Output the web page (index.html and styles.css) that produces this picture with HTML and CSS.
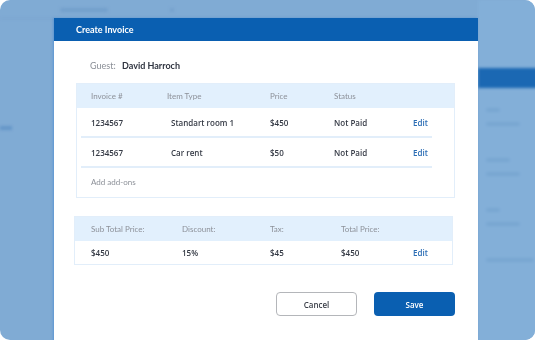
FILE: index.html
```html
<!DOCTYPE html>
<html lang="en">
<head>
  <meta charset="UTF-8">
  <title>Create Invoice</title>
  <link rel="stylesheet" href="styles.css">
</head>
<body>

  <div class="screen">
    <!-- blurred page behind the modal -->
    <div class="backdrop">
      <div class="bd-top">
        <span class="bd-text w50"></span>
        <span class="bd-text w6"></span>
      </div>
      <div class="bd-left-text"></div>
      <div class="bd-side">
        <div class="bd-bar"></div>
        <span class="bd-text w20"></span>
        <span class="bd-text w40"></span>
        <span class="bd-text w30 gap"></span>
        <span class="bd-text w40"></span>
        <span class="bd-text w20 gap"></span>
        <span class="bd-text w40"></span>
        <span class="bd-text w50 gap"></span>
      </div>
    </div>

    <div class="modal">
      <div class="modal-head">Create Invoice</div>
      <div class="modal-body">
        <div class="guest">
          <span class="label">Guest:</span>
          <span class="name">David Harroch</span>
        </div>

        <div class="box items">
          <div class="row head">
            <span>Invoice #</span>
            <span>Item Type</span>
            <span>Price</span>
            <span>Status</span>
            <span></span>
          </div>
          <div class="row line">
            <span>1234567</span>
            <span class="indent">Standart room 1</span>
            <span>$450</span>
            <span>Not Paid</span>
            <a class="edit">Edit</a>
          </div>
          <div class="row line">
            <span>1234567</span>
            <span class="indent">Car rent</span>
            <span>$50</span>
            <span>Not Paid</span>
            <a class="edit">Edit</a>
          </div>
          <div class="addons">Add add-ons</div>
        </div>

        <div class="box totals">
          <div class="row head">
            <span>Sub Total Price:</span>
            <span>Discount:</span>
            <span>Tax:</span>
            <span>Total Price:</span>
            <span></span>
          </div>
          <div class="row values">
            <span>$450</span>
            <span>15%</span>
            <span>$45</span>
            <span>$450</span>
            <a class="edit">Edit</a>
          </div>
        </div>

        <div class="actions">
          <button class="btn cancel">Cancel</button>
          <button class="btn save">Save</button>
        </div>
      </div>
    </div>
  </div>

</body>
</html>
```

FILE: styles.css
```css
body {
  margin: 0;
  background: #fff;
  font-family: Lato, 'Open Sans', sans-serif;
}

.screen {
  position: relative;
  width: 535px;
  height: 340px;
  border-radius: 10px;
  background: #80abd4;
  overflow: hidden;
  padding: 18px 0 0 54px;
  box-sizing: border-box;
}

/* ---- blurred background page ---- */
.backdrop {
  position: absolute;
  inset: 0;
  filter: blur(1.5px);
}

.bd-top {
  display: flex;
  gap: 62px;
  padding: 8px 0 0 60px;
  height: 10px;
  border-bottom: 1px solid #78a4cf;
}

.bd-text {
  display: block;
  height: 4px;
  background: #78a6d1;
  border-radius: 2px;
}

.bd-top .bd-text {
  background: #729fcc;
}

.w6 { width: 4px; }
.w20 { width: 14px; }
.w30 { width: 24px; }
.w40 { width: 34px; }
.w50 { width: 48px; }

.bd-left-text {
  position: absolute;
  left: 0;
  top: 126px;
  width: 12px;
  height: 4px;
  background: #6496c8;
}

.bd-side {
  position: absolute;
  left: 478px;
  top: 0;
  width: 60px;
  height: 340px;
  padding-top: 68px;
  background: #83afd8;
  display: flex;
  flex-direction: column;
  align-items: flex-start;
}

.bd-side .bd-text {
  margin: 0 0 10px 8px;
}

.bd-side .gap {
  margin-top: 22px;
}

.bd-bar {
  width: 100%;
  height: 20px;
  background: #1b68b3;
  margin-bottom: 20px;
}

/* ---- modal ---- */
.modal {
  position: relative;
  width: 424px;
  height: 340px;
  background: #fff;
  box-shadow: -1px 0 2px rgba(60, 130, 210, 0.5);
}

.modal-head {
  height: 23px;
  line-height: 23px;
  background: #0a5fb1;
  color: #fff;
  font-size: 9px;
  font-weight: 700;
  padding-left: 22px;
}

.modal-body {
  padding: 18px 23px 0 22px;
}

.guest {
  font-size: 9px;
  line-height: 14px;
  padding-left: 14px;
  margin-bottom: 10px;
}

.guest .label {
  color: #8a8e96;
  margin-right: 4px;
}

.guest .name {
  color: #2f3440;
  font-size: 9px;
  font-weight: 700;
}

.box {
  border: 1px solid #e2eefa;
}

.row {
  display: grid;
  grid-template-columns: 76px 103px 64px 78px 1fr;
  align-items: center;
  padding-left: 14px;
  font-size: 8px;
}

.row.head {
  height: 24px;
  background: #e2f0fd;
  color: #8d9199;
}

.row.line {
  height: 28px;
  margin: 0 22px 0 4px;
  padding-left: 10px;
  border-bottom: 2px solid #e2eefa;
  color: #353a45;
  font-family: 'Open Sans', sans-serif;
  font-weight: 600;
}

.row.line .indent {
  padding-left: 4px;
}

.edit {
  color: #2b6db5;
  font-family: 'Open Sans', sans-serif;
  font-weight: 600;
  padding-left: 1px;
}

.addons {
  height: 29px;
  line-height: 29px;
  padding-left: 14px;
  font-size: 8px;
  color: #8d9199;
}

.totals {
  margin: 18px 2px 0 -2px;
}

.totals .row {
  grid-template-columns: 91px 88px 71px 71px 1fr;
  padding-left: 16px;
}

.row.values {
  height: 23px;
  color: #353a45;
  font-family: 'Open Sans', sans-serif;
  font-weight: 600;
}

.actions {
  display: flex;
  justify-content: flex-end;
  gap: 17px;
  margin-top: 27px;
}

.btn {
  width: 81px;
  height: 24px;
  border-radius: 4px;
  font-size: 8px;
  font-family: 'Open Sans', sans-serif;
  font-weight: 600;
  cursor: pointer;
}

.cancel {
  background: #fff;
  border: 1px solid #b4b6ba;
  color: #3a3e47;
}

.save {
  background: #0a5fb1;
  border: none;
  color: #fff;
}
```
